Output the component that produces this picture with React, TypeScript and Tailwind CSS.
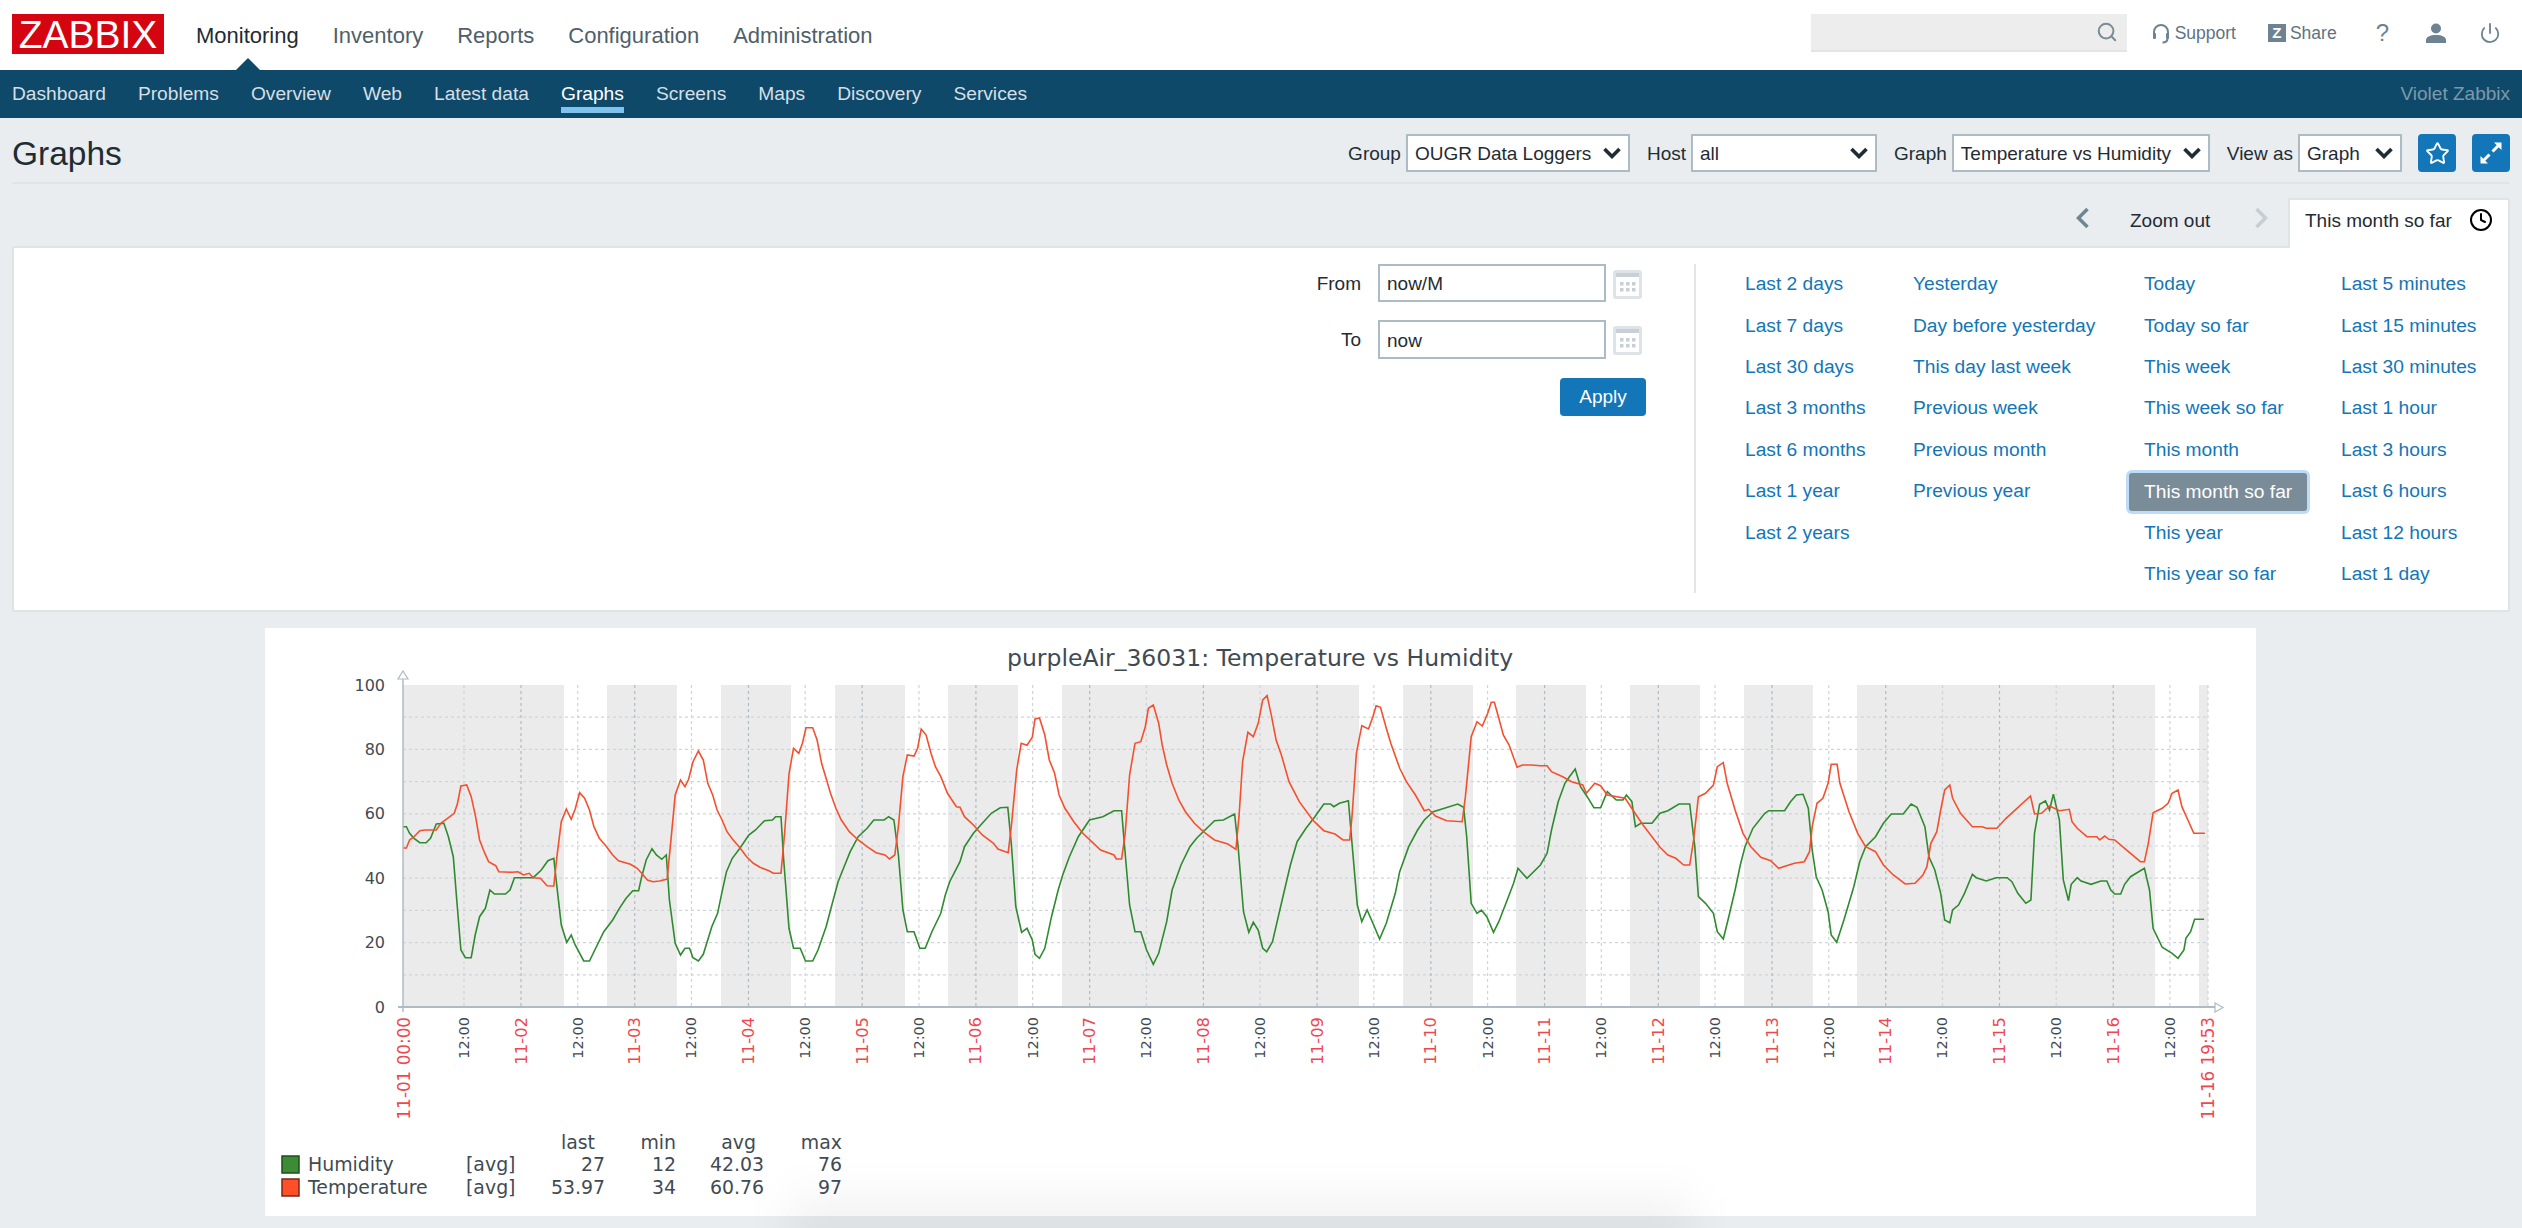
import React from "react";
import { Search, Star, Power, Clock } from "lucide-react";

const mainNav = ["Monitoring", "Inventory", "Reports", "Configuration", "Administration"];
const subNav = ["Dashboard", "Problems", "Overview", "Web", "Latest data", "Graphs", "Screens", "Maps", "Discovery", "Services"];

const ranges = [
  { width: "w-[168px]", items: ["Last 2 days", "Last 7 days", "Last 30 days", "Last 3 months", "Last 6 months", "Last 1 year", "Last 2 years"] },
  { width: "w-[231px]", items: ["Yesterday", "Day before yesterday", "This day last week", "Previous week", "Previous month", "Previous year"] },
  { width: "w-[197px]", items: ["Today", "Today so far", "This week", "This week so far", "This month", "This month so far", "This year", "This year so far"] },
  { width: "w-[165px]", items: ["Last 5 minutes", "Last 15 minutes", "Last 30 minutes", "Last 1 hour", "Last 3 hours", "Last 6 hours", "Last 12 hours", "Last 1 day"] },
];

// graph traces, read off three crops: [origin x, x scale, x0, y0, x1, y1 ...]
const toPoints = (originX: number, scaleX: number, flat: number[]) => {
  const out: string[] = [];
  for (let i = 0; i < flat.length; i += 2) {
    out.push(`${(originX + flat[i] / scaleX).toFixed(1)},${(620 + flat[i + 1] / 3).toFixed(1)}`);
  }
  return out.join(" ");
};

const redPoints = [
  toPoints(260, 2.24, [320,684,328,684,335,660,345,650,358,632,370,630,395,630,405,610,420,595,435,580,442,553,450,498,463,495,473,530,483,590,492,660,502,695,512,725,528,737,535,755,565,757,578,755,590,765,603,760,612,773,628,775,643,797,658,798,665,710,675,605,686,567,697,598,706,567,716,518,727,535,738,570,748,620,760,655,775,678,790,705,803,722,830,733,845,745,855,760,868,780,880,785,895,783,912,777,920,668,930,525,942,480,952,500,960,478,970,425,982,393,993,420,1003,490,1014,525,1024,570,1035,600,1046,635,1060,660,1075,683,1090,710,1105,730,1120,742,1140,752,1150,760,1167,760,1175,640,1185,462,1195,385,1207,400,1215,370,1223,323,1238,323,1248,360,1258,430,1268,475,1278,520,1290,565,1302,600,1320,635,1340,660,1360,680,1380,698,1400,705,1410,717,1422,705,1430,620,1440,470,1450,405,1465,408,1473,385,1481,327,1492,345,1503,400,1513,440,1525,470,1540,520,1560,560]),
  toPoints(960, 2.24, [0,562,10,590,30,615,50,645,75,670,85,687,108,698,115,620,127,450,137,370,150,376,162,352,168,297,178,294,190,345,200,420,212,460,222,525,235,565,255,605,275,640,295,665,315,690,345,705,350,717,362,717,370,640,380,465,392,370,405,365,415,320,422,265,433,255,445,310,453,375,463,435,475,490,490,540,505,575,525,610,545,635,570,660,600,672,618,688,625,590,633,425,645,337,657,350,668,310,678,240,688,227,698,290,708,360,720,405,737,485,760,545,790,600,815,632,840,642,858,660,873,660,878,590,888,400,900,317,915,327,925,290,932,257,942,262,955,325,965,370,985,445,1000,485,1020,525,1040,572,1050,568,1065,588,1090,602,1125,605,1132,530,1145,350,1158,305,1170,318,1182,280,1190,247,1197,247,1207,295,1217,345,1230,375,1248,442,1260,435,1280,435,1300,437,1315,437,1325,455,1350,470,1370,485,1395,495,1403,520,1422,490,1435,497,1450,525,1490,535,1510,575,1530,615,1568,682]),
  toPoints(1660, 2.529, [20,705,40,715,60,735,75,735,85,660,97,530,115,520,135,495,145,440,160,428,170,490,190,570,210,640,230,680,255,712,280,722,300,745,340,730,365,725,378,695,385,620,397,550,412,535,425,490,433,433,448,433,455,490,478,575,500,640,520,680,545,695,565,735,590,765,620,792,645,790,665,765,675,740,685,670,700,635,710,570,720,510,733,495,740,535,760,580,790,620,815,620,825,625,852,625,875,595,900,568,937,528,947,582,965,580,985,558,1010,572,1035,568,1042,605,1055,625,1080,650,1105,650,1112,660,1125,648,1135,658,1150,660,1175,685,1215,725,1225,725,1235,670,1247,578,1270,565,1285,550,1295,520,1310,510,1320,560,1335,600,1350,640,1378,640]),
].join(" ");

const greenPoints = [
  toPoints(260, 2.24, [320,620,328,620,335,640,345,655,358,668,372,668,382,655,395,612,412,610,422,650,433,710,442,860,450,990,460,1013,473,1013,482,945,492,890,505,865,515,810,525,822,550,822,560,810,570,773,612,773,630,750,645,722,658,715,665,800,675,915,687,967,697,945,706,975,725,1023,738,1023,750,990,770,935,790,900,805,865,820,835,835,812,848,812,855,770,865,720,878,686,888,705,900,718,910,705,917,840,930,970,942,1005,952,985,962,985,970,1013,982,1023,993,1003,1012,920,1025,880,1035,815,1045,755,1058,715,1075,685,1095,645,1110,630,1130,602,1148,600,1155,590,1167,590,1173,720,1185,925,1195,985,1210,985,1222,1023,1238,1023,1250,990,1268,920,1280,860,1295,785,1310,735,1322,695,1340,650,1360,625,1375,600,1398,600,1408,590,1420,600,1430,705,1440,870,1450,935,1465,935,1478,985,1490,985,1505,935,1525,880,1535,825,1545,785]),
  toPoints(960, 2.24, [0,725,10,680,30,640,50,610,70,580,90,563,107,562,115,670,125,860,138,937,150,925,162,960,168,1003,178,1015,190,985,205,890,220,810,230,765,245,710,265,650,290,600,320,590,345,572,362,572,368,670,380,855,392,935,405,935,418,990,433,1033,445,1000,463,905,475,810,495,735,515,680,530,655,570,602,590,600,615,582,623,680,635,875,647,937,657,907,668,930,678,985,687,995,700,965,720,850,740,735,755,665,775,625,795,590,815,552,830,552,837,560,850,550,870,542,878,670,890,855,900,905,912,870,925,910,940,957,955,910,975,820,985,755,1005,680,1025,630,1040,600,1060,575,1085,565,1115,552,1128,562,1135,650,1145,850,1158,880,1168,870,1180,890,1195,937,1207,905,1220,860,1240,790,1250,745,1270,775,1300,735,1315,700,1325,630,1340,545,1355,490,1365,470,1378,447,1390,500,1405,530,1420,563,1435,563,1450,515,1470,540,1485,540,1493,525,1505,545,1513,620,1525,610,1550,610,1568,580]),
  toPoints(1660, 2.529, [20,572,48,552,75,552,88,680,97,830,115,850,135,880,145,935,160,957,175,885,190,810,203,735,215,680,235,625,265,580,275,572,315,572,330,545,345,525,362,523,375,565,385,690,395,770,410,810,425,875,433,945,447,967,465,900,490,800,505,725,520,680,545,650,565,610,585,582,615,582,635,552,650,562,670,620,680,710,695,750,710,820,720,900,733,908,740,870,755,855,770,820,790,763,800,773,825,783,850,773,878,773,890,785,905,820,925,850,938,840,947,640,960,553,975,543,985,570,995,523,1010,600,1020,780,1033,842,1040,793,1055,773,1065,783,1090,793,1115,783,1130,783,1140,810,1150,822,1165,822,1175,793,1190,770,1225,745,1238,810,1247,925,1270,982,1295,1000,1310,1015,1325,990,1330,955,1342,935,1352,898,1376,898]),
].join(" ");

// grey bands (non working time)
const bands = [[403,564],[607,677],[721,791],[835,905],[948,1018],[1062,1359],[1403,1473],[1516,1586],[1630,1700],[1744,1813],[1857,2155],[2199,2208]];
const noonTicks = Array.from({ length: 16 }, (_, i) => 464 + i * 113.73);
const dayTicks = Array.from({ length: 15 }, (_, i) => ({ x: 521 + i * 113.73, label: `11-${String(i + 2).padStart(2, "0")}` }));
const yTicks = [0, 10, 20, 30, 40, 50, 60, 70, 80, 90, 100];

const legend = [
  { name: "Humidity", y: 1171, fill: "#3c8b35", line: "#1d4f1b", values: ["27", "12", "42.03", "76"] },
  { name: "Temperature", y: 1194, fill: "#ff5029", line: "#74291a", values: ["53.97", "34", "60.76", "97"] },
];
const legendX = [605, 676, 764, 842];

function Graph() {
  const dark = "#3f4b53";
  const red = "#f0474f";
  return (
    <svg viewBox="265 628 1991 588" className="block w-full h-full" fontFamily="'DejaVu Sans', sans-serif">
      <rect x="265" y="628" width="1991" height="588" fill="#ffffff" />
      <text x="1007" y="666" fontSize="23.500" fill={dark}>purpleAir_36031: Temperature vs Humidity</text>

      {bands.map(([a, b]) => (
        <rect key={a} x={a} y="685" width={b - a} height="322" fill="#ebebeb" />
      ))}
      {yTicks.filter((v) => v > 0 && v < 100).map((v) => (
        <line key={v} x1="403" x2="2208" y1={1007 - v * 3.22} y2={1007 - v * 3.22} stroke="#cdd5da" strokeWidth="1.2" strokeDasharray="3 3" />
      ))}
      {noonTicks.map((x) => (
        <line key={x} x1={x} x2={x} y1="685" y2="1007" stroke="#cdd5da" strokeWidth="1.2" strokeDasharray="3 3" />
      ))}
      {dayTicks.map((t) => (
        <line key={t.x} x1={t.x} x2={t.x} y1="685" y2="1007" stroke="#aebcc6" strokeWidth="1.2" strokeDasharray="3 3" />
      ))}
      <line x1="2208" x2="2208" y1="685" y2="1007" stroke="#cdd5da" strokeWidth="1.2" strokeDasharray="3 3" />

      <polyline points={greenPoints} fill="none" stroke="#2f8a30" strokeWidth="1.6" />
      <polyline points={redPoints} fill="none" stroke="#f4502f" strokeWidth="1.6" />

      <line x1="403" x2="403" y1="678" y2="1012" stroke="#acbbc6" strokeWidth="1.5" />
      <line x1="398" x2="2215" y1="1007" y2="1007" stroke="#acbbc6" strokeWidth="2" />
      <polygon points="403,671 408,679 398,679" fill="#ffffff" stroke="#acbbc6" strokeWidth="1.2" />
      <polygon points="2215,1003 2223,1007.500 2215,1012" fill="#ffffff" stroke="#acbbc6" strokeWidth="1.2" />

      {yTicks.filter((v) => v % 20 === 0).map((v) => (
        <text key={v} x="385" y={1007 - v * 3.22 + 1} fontSize="16" fill={dark} textAnchor="end" dominantBaseline="middle">{v}</text>
      ))}

      {noonTicks.map((x) => (
        <text key={x} transform={`rotate(-90 ${x} 1017)`} x={x} y="1017" fontSize="14.500" fill={dark} textAnchor="end" dominantBaseline="central">12:00</text>
      ))}
      {dayTicks.map((t) => (
        <text key={t.label} transform={`rotate(-90 ${t.x} 1017)`} x={t.x} y="1017" fontSize="16.400" fill={red} textAnchor="end" dominantBaseline="central">{t.label}</text>
      ))}
      <text transform="rotate(-90 404 1017)" x="404" y="1017" fontSize="16.800" fill={red} textAnchor="end" dominantBaseline="central">11-01 00:00</text>
      <text transform="rotate(-90 2208 1017)" x="2208" y="1017" fontSize="16.800" fill={red} textAnchor="end" dominantBaseline="central">11-16 19:53</text>

      <g fontSize="18.900" fill={dark}>
        <text x="595" y="1149" textAnchor="end">last</text>
        <text x="676" y="1149" textAnchor="end">min</text>
        <text x="756" y="1149" textAnchor="end">avg</text>
        <text x="842" y="1149" textAnchor="end">max</text>
        {legend.map((row) => (
          <g key={row.name}>
            <rect x="282" y={row.y - 15} width="17" height="17" fill={row.fill} stroke={row.line} strokeWidth="1.5" />
            <text x="308" y={row.y}>{row.name}</text>
            <text x="466" y={row.y}>[avg]</text>
            {row.values.map((v, i) => (
              <text key={i} x={legendX[i]} y={row.y} textAnchor="end">{v}</text>
            ))}
          </g>
        ))}
      </g>
    </svg>
  );
}

function Select({ label, value, width }: { label: string; value: string; width: string }) {
  return (
    <div className="flex items-center gap-[5px]">
      <span className="pt-[2px] text-[#1f2c33]">{label}</span>
      <div className={`${width} h-[38px] border-2 border-[#acbbc4] bg-white flex items-center justify-between pl-[7px] pr-[7px] text-[#1f2c33]`}>
        <span className="pt-[2px] whitespace-nowrap">{value}</span>
        <svg width="18" height="12" viewBox="0 0 18 12" fill="none" stroke="#1f2c33" strokeWidth="3.600" className="shrink-0">
          <path d="M1.500 2 9 9.500 16.500 2" />
        </svg>
      </div>
    </div>
  );
}

function CalendarIcon() {
  return (
    <svg width="29" height="29" viewBox="0 0 29 29" className="mr-[4px] ml-[7px] mt-[2px]">
      <rect x="0" y="0" width="29" height="29" rx="3" fill="#dde3e7" />
      <rect x="3" y="6" width="23" height="20" fill="#ffffff" />
      <rect x="3" y="3" width="23" height="4" fill="#c6d0d6" />
      {[7, 13, 19].map((x) =>
        [12, 18].map((y) => <rect key={`${x}${y}`} x={x} y={y} width="3.500" height="3.500" fill="#c6d0d6" />)
      )}
    </svg>
  );
}

export default function App() {
  return (
    <div className="relative h-[1228px] overflow-hidden bg-[#e9edf0] font-['Liberation_Sans',Arial,sans-serif] text-[19.200px]">
      {/* Main nav */}
      <div className="h-[70px] bg-white flex items-center pl-3 pr-[21px]">
        <div className="w-[152px] h-[40px] mb-[2px] bg-[#d40511] flex items-center justify-center text-white text-[39px] leading-none">
          ZABBIX
        </div>
        <nav className="flex gap-[34px] ml-[32px] text-[22px]">
          {mainNav.map((item, i) => (
            <span key={item} className={i === 0 ? "text-[#1f2c33]" : "text-[#4f5f6a]"}>{item}</span>
          ))}
        </nav>
        <div className="ml-auto flex items-center mb-[4px] text-[17.500px] text-[#5e7380]">
          <div className="w-[316px] h-[38px] bg-[#ededed] border-b-2 border-[#e4e4e4] flex items-center justify-end pr-[9px]">
            <Search size={22} color="#7b8c97" strokeWidth={2.2} />
          </div>
          <svg width="18" height="21" viewBox="0 0 18 21" fill="none" stroke="#6d8391" strokeWidth="2" className="ml-[25px] mr-[5px]">
            <path d="M2 13V9a7 7 0 0 1 14 0v4" />
            <rect x="1" y="10" width="3" height="6" rx="1" fill="#6d8391" stroke="none" />
            <rect x="14" y="10" width="3" height="6" rx="1" fill="#6d8391" stroke="none" />
            <path d="M15.500 15.500c0 2.500-2 4-5 4" />
          </svg>
          <span>Support</span>
          <span className="ml-[32px] mr-[4px] w-[18px] h-[18px] bg-[#6d8391] text-white text-[15px] font-bold leading-[18px] text-center">Z</span>
          <span>Share</span>
          <span className="ml-[39px] text-[24px] leading-none text-[#6d8391]">?</span>
          <svg width="20" height="20" viewBox="0 0 20 20" fill="#6d8391" className="ml-[37px]">
            <circle cx="10" cy="5.500" r="5" />
            <path d="M0 20v-3c0-3 4-5 10-5s10 2 10 5v3z" />
          </svg>
          <Power size={22} color="#6d8391" strokeWidth={2} className="ml-[33px]" />
        </div>
      </div>

      {/* Sub nav */}
      <div className="relative h-[48px] bg-[#0f4969] flex items-center px-3">
        <div className="absolute left-[236px] top-[-12px] w-0 h-0 border-x-[12px] border-x-transparent border-b-[12px] border-b-[#0f4969]" />
        <nav className="flex gap-[32px]">
          {subNav.map((item) => (
            <span key={item} className={item === "Graphs" ? "relative text-white" : "text-[#d5dfe5]"}>
              {item}
              {item === "Graphs" && <span className="absolute left-0 right-0 top-[27px] h-[6px] bg-[#7fc4ef]" />}
            </span>
          ))}
        </nav>
        <span className="ml-auto text-[19px] text-[#7d99a9]">Violet Zabbix</span>
      </div>

      <div className="mx-3">
        {/* Title row */}
        <div className="h-[66px] pt-4 border-b-2 border-[#dfe4e7] flex items-start justify-between">
          <h1 className="text-[33.500px] leading-[38px] mt-[1px] text-[#1f2c33] font-normal">Graphs</h1>
          <div className="flex items-center gap-[17px] text-[19px]">
            <Select label="Group" value="OUGR Data Loggers" width="w-[224px]" />
            <Select label="Host" value="all" width="w-[186px]" />
            <Select label="Graph" value="Temperature vs Humidity" width="w-[258px]" />
            <Select label="View as" value="Graph" width="w-[104px]" />
            <div className="w-[38px] h-[38px] -ml-[1px] rounded-[4px] bg-[#1276b8] flex items-center justify-center">
              <Star size={25} color="#ffffff" strokeWidth={1.8} />
            </div>
            <div className="w-[38px] h-[38px] -ml-[1px] rounded-[4px] bg-[#1276b8] flex items-center justify-center">
              <svg width="24" height="24" viewBox="0 0 24 24" fill="#ffffff" stroke="#ffffff" strokeWidth="3">
                <path d="M19 5l-5.500 5.500M5 19l5.500-5.500" fill="none" />
                <path d="M15 1.500h7.500v7.500zM1.500 15v7.500h7.500z" strokeWidth="0" />
              </svg>
            </div>
          </div>
        </div>

        {/* Time selector row */}
        <div className="h-[62px] flex items-start justify-end text-[#1f2c33] text-[19px]">
          <svg width="15" height="22" viewBox="0 0 15 22" fill="none" stroke="#6d8694" strokeWidth="3.500" className="mt-[23px]">
            <path d="M12.500 2 3.500 11l9 9" />
          </svg>
          <span className="ml-[40px] mt-[23px] w-[82px]">Zoom out</span>
          <svg width="15" height="22" viewBox="0 0 15 22" fill="none" stroke="#c4ced4" strokeWidth="3.500" className="ml-[42px] mt-[23px]">
            <path d="M2.500 2l9 9-9 9" />
          </svg>
          <div className="relative z-10 ml-[19px] mt-[14px] w-[222px] h-[50px] bg-white border-2 border-b-0 border-[#dfe4e7] flex items-start justify-between pt-[7px] px-[15px]">
            <span>This month so far</span>
            <Clock size={24} color="#000000" strokeWidth={2} className="mt-[1px]" />
          </div>
        </div>

        {/* Filter panel */}
        <div className="h-[366px] border-2 border-[#dfe4e7] bg-white flex">
          <div className="w-[1680px] pt-4 pr-[48px] flex flex-col items-end text-[#1f2c33] text-[19px]">
            <div className="flex items-center h-[38px]">
              <span className="mr-[17px] pt-[2px]">From</span>
              <div className="w-[228px] h-[38px] border-2 border-[#acbbc4] pl-[7px] leading-[36px]">now/M</div>
              <CalendarIcon />
            </div>
            <div className="flex items-center h-[39px] mt-[18px]">
              <span className="mr-[17px] pt-[2px]">To</span>
              <div className="w-[228px] h-[39px] border-2 border-[#acbbc4] pl-[7px] leading-[37px]">now</div>
              <CalendarIcon />
            </div>
            <button className="w-[86px] h-[38px] mt-[19px] rounded-[4px] bg-[#1276b8] text-white">Apply</button>
          </div>
          <div className="w-[2px] h-[329px] mt-4 bg-[#e3e6e8]" />
          <div className="flex pl-[49px] pt-[16px] text-[#1276b8]">
            {ranges.map((col) => (
              <div key={col.items[0]} className={col.width}>
                {col.items.map((item) => (
                  <div key={item} className="h-[41.400px] flex items-center">
                    {item === "This month so far" ? (
                      <span className="-ml-[15px] px-[15px] h-[38px] leading-[38px] rounded-[3px] bg-[#7a8c98] text-white ring-[3px] ring-[#bcdcf7] whitespace-nowrap">{item}</span>
                    ) : (
                      <span className="whitespace-nowrap">{item}</span>
                    )}
                  </div>
                ))}
              </div>
            ))}
          </div>
        </div>
      </div>

      {/* Graph */}
      <div className="mt-4 ml-[265px] w-[1991px] h-[588px]">
        <Graph />
      </div>

      {/* soft shadow rising from the bottom edge */}
      <div className="absolute left-[790px] bottom-[-40px] w-[900px] h-[70px] bg-black/[0.05] blur-[22px]" />
    </div>
  );
}
